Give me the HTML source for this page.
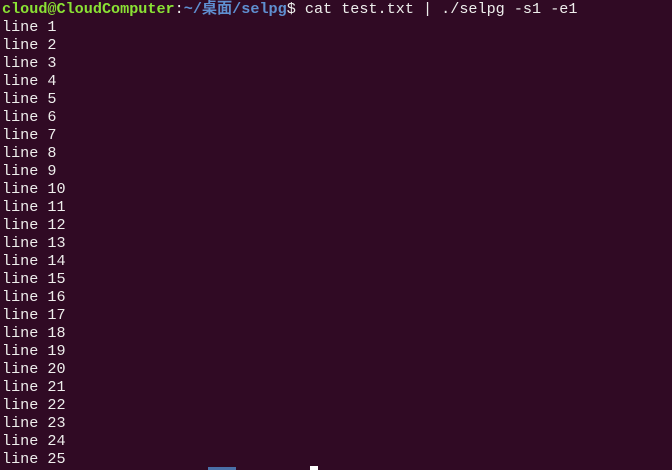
<!DOCTYPE html>
<html><head><meta charset="utf-8"><style>
html,body{margin:0;padding:0;width:672px;height:470px;overflow:hidden;background:#300a24;}
pre{margin:0;padding:0 0 0 2px;font-family:"Liberation Mono","Noto Sans CJK SC",monospace;font-size:15.15px;line-height:18px;color:#eeeeec;position:absolute;top:0;left:0;}
.g{color:#8ae234;font-weight:bold}
.b{color:#5f8fd0;font-weight:bold}
.blk{position:absolute;top:467px;left:208px;width:28px;height:3px;background:#4a70a8}
.cur{position:absolute;top:466px;left:310px;width:8px;height:4px;background:#fff}
</style></head><body>
<pre><span class="g">cloud@CloudComputer</span>:<span class="b">~/桌面/selpg</span>$ cat test.txt | ./selpg -s1 -e1
line 1
line 2
line 3
line 4
line 5
line 6
line 7
line 8
line 9
line 10
line 11
line 12
line 13
line 14
line 15
line 16
line 17
line 18
line 19
line 20
line 21
line 22
line 23
line 24
line 25</pre>
<div class="blk"></div><div class="cur"></div>
</body></html>
